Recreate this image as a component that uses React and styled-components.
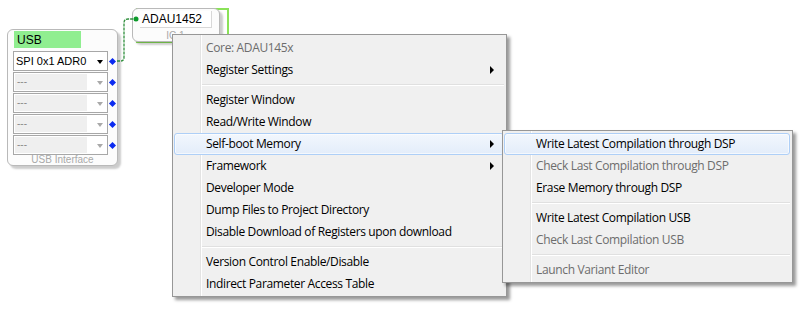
import React from "react";
import styled, { createGlobalStyle, css } from "styled-components";

const GlobalStyle = createGlobalStyle`
  html, body {
    margin: 0;
    padding: 0;
    background: #fff;
  }
  body {
    width: 811px;
    height: 333px;
    overflow: hidden;
    font-family: "Liberation Sans", Arial, sans-serif;
  }
`;

const Canvas = styled.div`
  position: relative;
  width: 811px;
  height: 333px;
  background: #fff;
  overflow: hidden;
`;

/* ---------- diagram blocks ---------- */

const Block = styled.div`
  position: absolute;
  left: ${(p) => p.$x}px;
  top: ${(p) => p.$y}px;
  width: ${(p) => p.$w}px;
  box-sizing: border-box;
  border: 1px solid #b9b9b9;
  border-radius: 6px;
  background: #fcfcfc;
  box-shadow: 3px 3px 2px rgba(0, 0, 0, 0.2);
  display: flex;
  flex-direction: column;
`;

const UsbBody = styled.div`
  display: flex;
  flex-direction: column;
  padding: 1px 0 0 5px;
`;

const GreenLabel = styled.div`
  width: 67px;
  height: 17px;
  margin-left: 1px;
  padding-left: 3px;
  box-sizing: border-box;
  background: #90ee90;
  font-size: 12px;
  line-height: 18px;
  color: #000;
`;

const Ports = styled.div`
  display: flex;
  flex-direction: column;
  gap: 1px;
  margin-top: 3px;
`;

const PortRow = styled.div`
  display: flex;
  align-items: center;
  height: 20px;
`;

const Combo = styled.div`
  position: relative;
  width: 95px;
  height: 20px;
  box-sizing: border-box;
  border: 1px solid #a7a7a7;
  background: #fff;
  display: flex;
  align-items: center;
`;

const ComboText = styled.div`
  font-size: 11px;
  padding-left: 2px;
  color: #000;
  ${(p) =>
    p.$disabled &&
    css`
      width: 72px;
      height: 16px;
      margin-left: 1px;
      padding-left: 2px;
      box-sizing: border-box;
      background: #efefef;
      color: #8a8a8a;
      font-size: 10px;
      line-height: 15px;
    `}
`;

const ComboArrow = styled.div`
  position: absolute;
  right: 4px;
  top: 8px;
  width: 0;
  height: 0;
  border-left: 3.5px solid transparent;
  border-right: 3.5px solid transparent;
  border-top: 4px solid ${(p) => (p.$disabled ? "#a9a9a9" : "#000")};
`;

const Pin = styled.div`
  width: 5px;
  height: 5px;
  margin-left: 2px;
  background: #0b2bf0;
  transform: rotate(45deg);
`;

const Caption = styled.div`
  height: 10px;
  font-size: 10px;
  line-height: 10px;
  text-align: center;
  color: #a9a9a9;
`;

const IcBody = styled.div`
  display: flex;
  flex-direction: column;
  padding: 2px 0 0 7px;
`;

const NameBox = styled.div`
  width: 72px;
  height: 17px;
  box-sizing: border-box;
  padding-left: 2px;
  background: #fff;
  border-right: 1px solid #d8d8d8;
  border-bottom: 1px solid #d8d8d8;
  font-size: 12px;
  line-height: 17px;
  color: #000;
`;

const IcCaption = styled(Caption)`
  margin-top: 3px;
  padding-right: 8px;
`;

const Selection = styled.div`
  position: absolute;
  left: 136px;
  top: 8px;
  width: 93px;
  height: 35px;
  box-sizing: border-box;
  border: 2px solid #8ae258;
  border-left: none;
`;

const Wire = styled.svg`
  position: absolute;
  left: 0;
  top: 0;
  pointer-events: none;
`;

/* ---------- context menus ---------- */

const Menu = styled.div`
  position: absolute;
  left: ${(p) => p.$x}px;
  top: ${(p) => p.$y}px;
  width: ${(p) => p.$w}px;
  box-sizing: border-box;
  padding: 2px 0 1px;
  border: 1px solid #979797;
  background: linear-gradient(
      to right,
      transparent 27px,
      #e3e3e3 27px,
      #e3e3e3 28px,
      #ffffff 28px,
      #ffffff 29px,
      transparent 29px
    ),
    #f0f0f0;
  box-shadow: 3px 3px 3px rgba(0, 0, 0, 0.4);
  font-family: "Open Sans", "Noto Sans", sans-serif;
  font-size: 12px;
  letter-spacing: -0.35px;
  display: flex;
  flex-direction: column;
`;

const Item = styled.div`
  position: relative;
  height: 22px;
  margin: 0 2px 0 1px;
  padding-left: 31px;
  padding-bottom: 1px;
  box-sizing: border-box;
  border: 1px solid transparent;
  border-radius: 3px;
  display: flex;
  align-items: center;
  color: ${(p) => (p.$disabled ? "#6d6d6d" : "#000")};
  white-space: nowrap;
  ${(p) =>
    p.$active &&
    css`
      border-color: #aecff7;
      background: linear-gradient(to bottom, #f2f7fd, #e3edfa);
      box-shadow: inset 0 0 0 1px rgba(255, 255, 255, 0.6);
    `}
`;

const SubArrow = styled.span`
  position: absolute;
  right: 9px;
  top: 6px;
  width: 0;
  height: 0;
  border-top: 4px solid transparent;
  border-bottom: 4px solid transparent;
  border-left: 4px solid #000;
`;

const Separator = styled.div`
  height: 0;
  margin: 3px 2px 3px 29px;
  border-top: 1px solid #e0e0e0;
  border-bottom: 1px solid #fff;
`;

const mainItems = [
  { label: "Core: ADAU145x", disabled: true },
  { label: "Register Settings", sub: true },
  "sep",
  { label: "Register Window" },
  { label: "Read/Write Window" },
  { label: "Self-boot Memory", sub: true, active: true },
  { label: "Framework", sub: true },
  { label: "Developer Mode" },
  { label: "Dump Files to Project Directory" },
  { label: "Disable Download of Registers upon download" },
  "sep",
  { label: "Version Control Enable/Disable" },
  { label: "Indirect Parameter Access Table" },
];

const bootItems = [
  { label: "Write Latest Compilation through DSP", active: true },
  { label: "Check Last Compilation through DSP", disabled: true },
  { label: "Erase Memory through DSP" },
  "sep",
  { label: "Write Latest Compilation USB" },
  { label: "Check Last Compilation USB", disabled: true },
  "sep",
  { label: "Launch Variant Editor", disabled: true },
];

function MenuList({ items, x, y, w }) {
  return (
    <Menu $x={x} $y={y} $w={w}>
      {items.map((it, i) =>
        it === "sep" ? (
          <Separator key={i} />
        ) : (
          <Item key={i} $active={it.active} $disabled={it.disabled}>
            {it.label}
            {it.sub && <SubArrow />}
          </Item>
        )
      )}
    </Menu>
  );
}

const ports = [
  { label: "SPI 0x1 ADR0" },
  { label: "---", disabled: true },
  { label: "---", disabled: true },
  { label: "---", disabled: true },
  { label: "---", disabled: true },
];

export default function App() {
  return (
    <Canvas>
      <GlobalStyle />

      <Block $x={7} $y={29} $w={111}>
        <UsbBody>
          <GreenLabel>USB</GreenLabel>
          <Ports>
            {ports.map((p, i) => (
              <PortRow key={i}>
                <Combo>
                  <ComboText $disabled={p.disabled}>{p.label}</ComboText>
                  <ComboArrow $disabled={p.disabled} />
                </Combo>
                <Pin />
              </PortRow>
            ))}
          </Ports>
        </UsbBody>
        <Caption>USB Interface</Caption>
      </Block>

      <Selection />
      <Block $x={132} $y={8} $w={88}>
        <IcBody>
          <NameBox>ADAU1452</NameBox>
          <IcCaption>IC 1</IcCaption>
        </IcBody>
      </Block>

      <Wire width="811" height="333" viewBox="0 0 811 333">
        <path
          d="M117 61 H121 Q124 61 124 57 V23 Q124 19 128 19 H135"
          fill="none"
          stroke="#2f8f3c"
          strokeWidth="1.3"
          strokeDasharray="3 1"
        />
        <circle cx="136" cy="19" r="2.5" fill="#0c9a2a" />
      </Wire>

      <MenuList items={mainItems} x={172} y={34} w={335} />
      <MenuList items={bootItems} x={502} y={130} w={291} />
    </Canvas>
  );
}
